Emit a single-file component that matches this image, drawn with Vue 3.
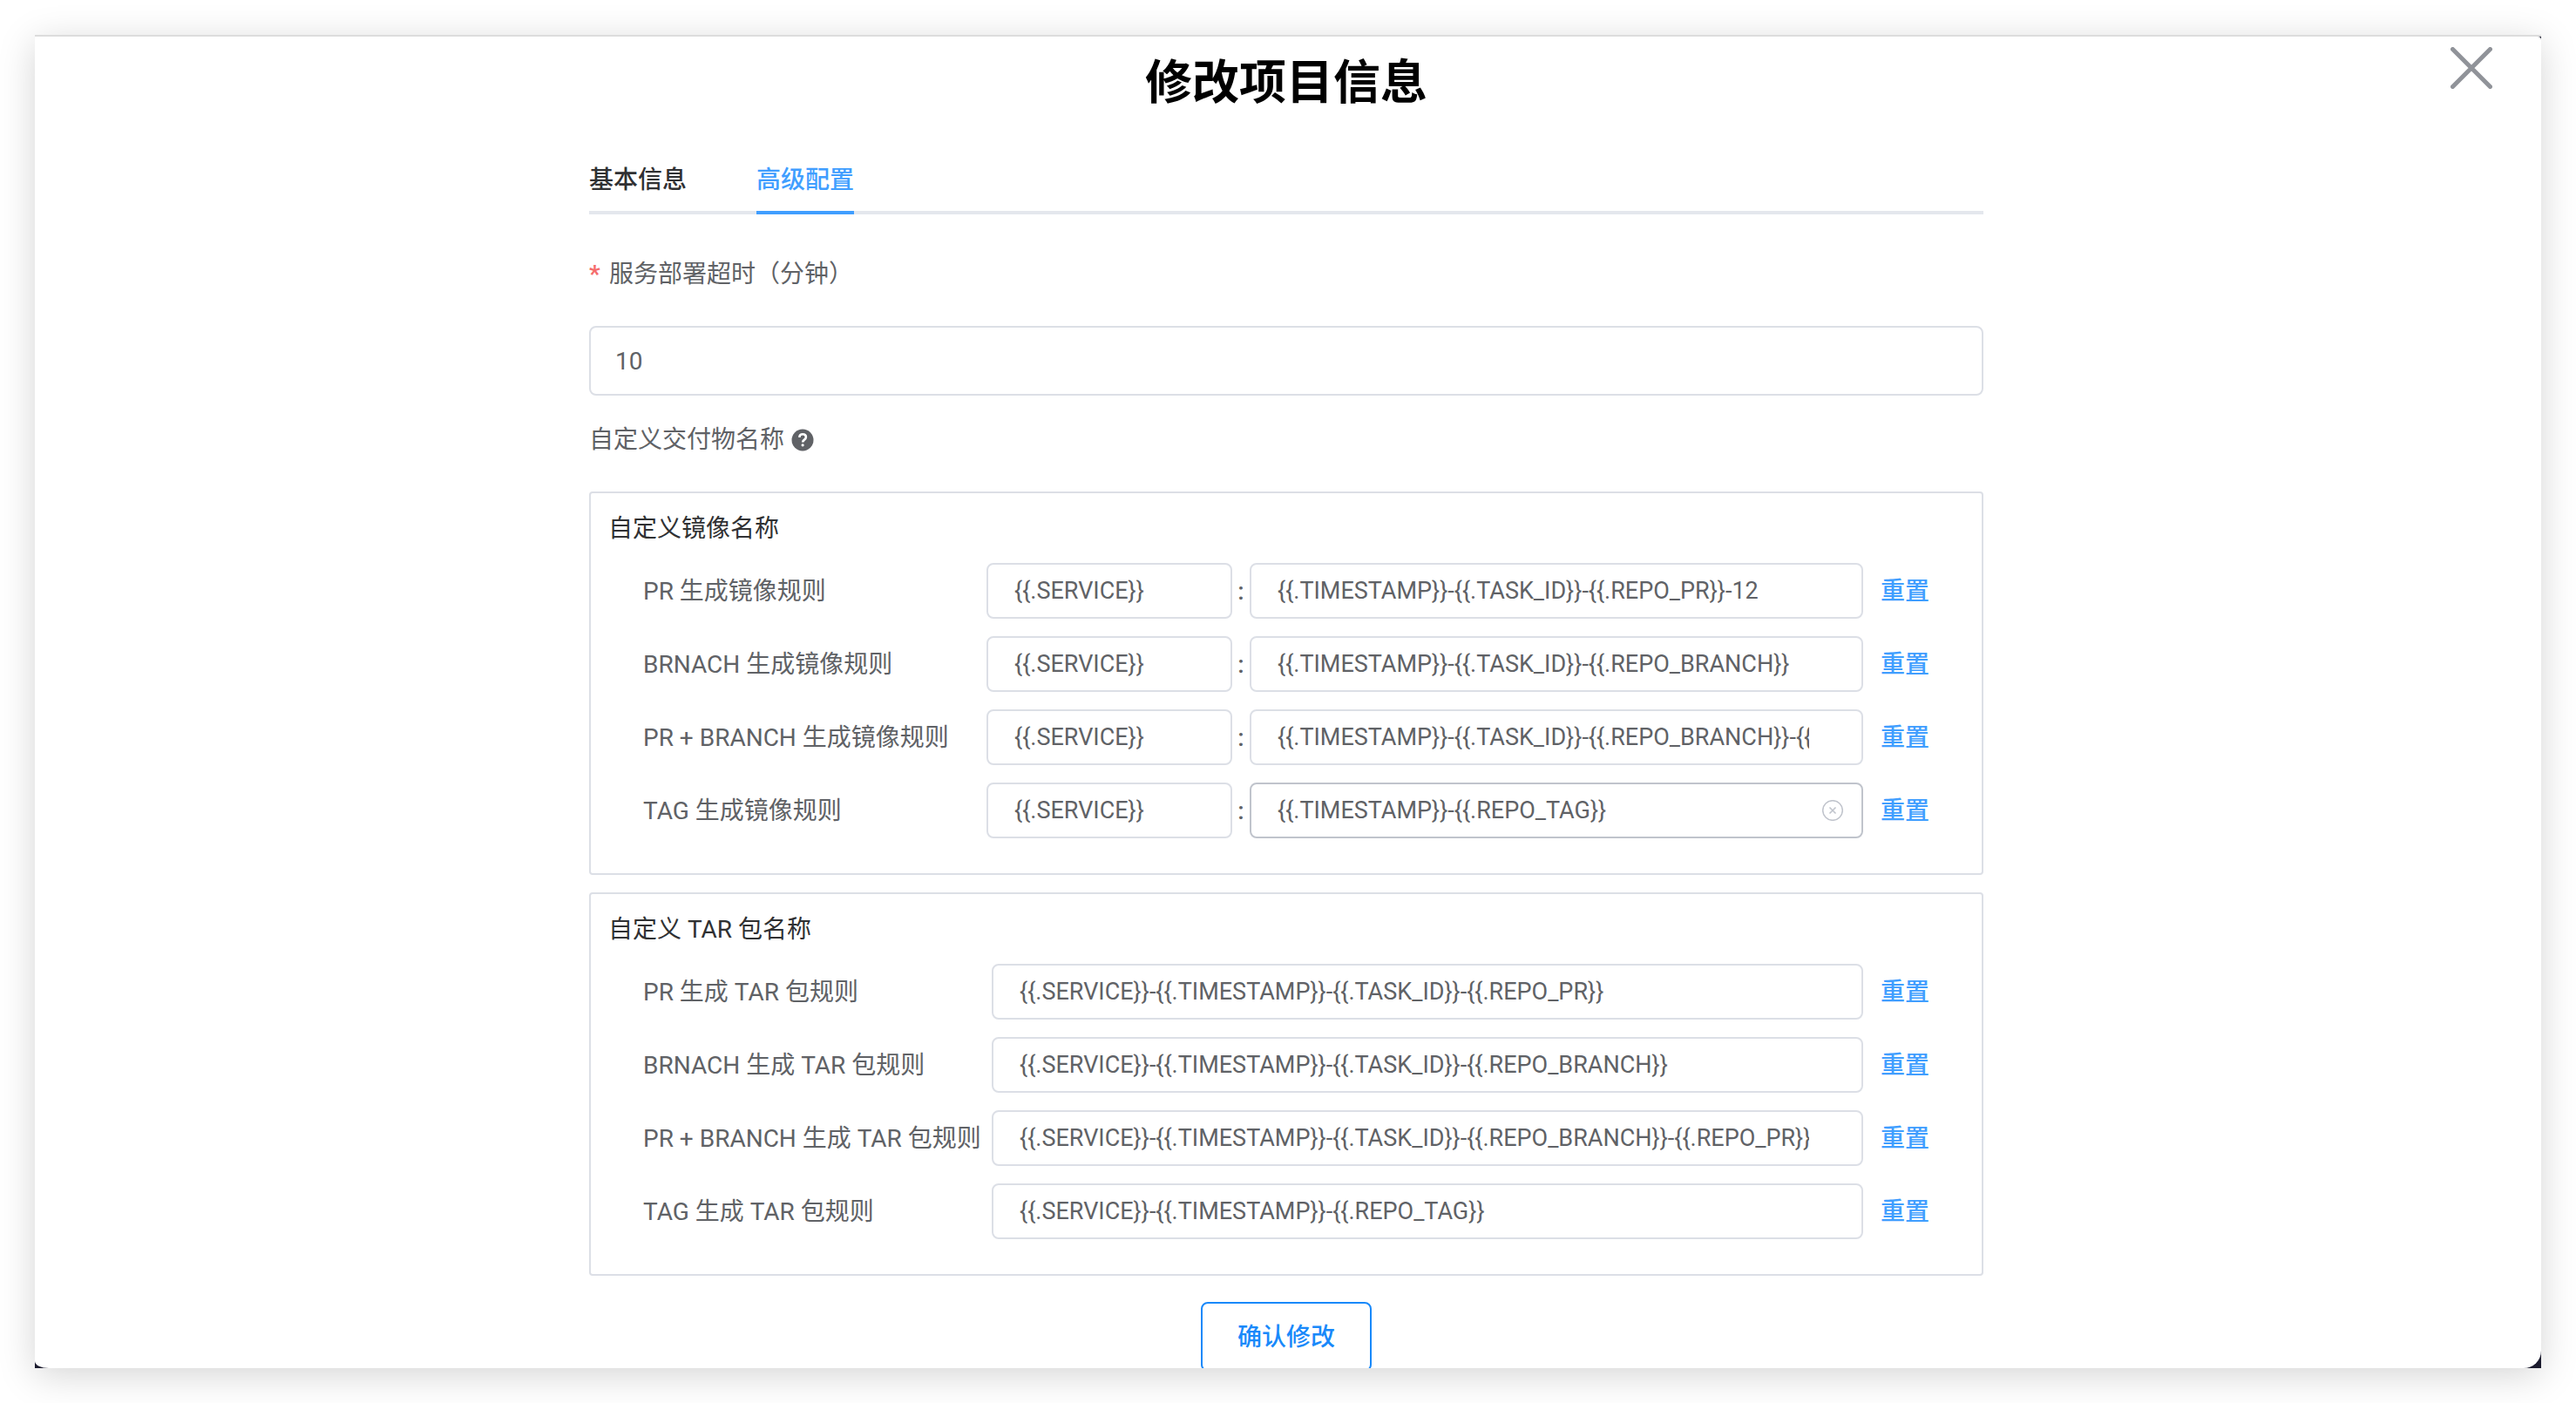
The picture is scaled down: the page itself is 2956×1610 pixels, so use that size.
<script setup>
import { ref, reactive } from 'vue'

const tabs = ['基本信息', '高级配置']
const activeTab = ref('高级配置')
const timeout = ref('10')

const imageRules = reactive([
  { id: 'img-pr', label: 'PR 生成镜像规则', name: '{{.SERVICE}}', tag: '{{.TIMESTAMP}}-{{.TASK_ID}}-{{.REPO_PR}}-12' },
  { id: 'img-branch', label: 'BRNACH 生成镜像规则', name: '{{.SERVICE}}', tag: '{{.TIMESTAMP}}-{{.TASK_ID}}-{{.REPO_BRANCH}}' },
  { id: 'img-pr-branch', label: 'PR + BRANCH 生成镜像规则', name: '{{.SERVICE}}', tag: '{{.TIMESTAMP}}-{{.TASK_ID}}-{{.REPO_BRANCH}}-{{.REPO_PR}}' },
  { id: 'img-tag', label: 'TAG 生成镜像规则', name: '{{.SERVICE}}', tag: '{{.TIMESTAMP}}-{{.REPO_TAG}}', clearable: true },
])

const tarRules = reactive([
  { id: 'tar-pr', label: 'PR 生成 TAR 包规则', value: '{{.SERVICE}}-{{.TIMESTAMP}}-{{.TASK_ID}}-{{.REPO_PR}}' },
  { id: 'tar-branch', label: 'BRNACH 生成 TAR 包规则', value: '{{.SERVICE}}-{{.TIMESTAMP}}-{{.TASK_ID}}-{{.REPO_BRANCH}}' },
  { id: 'tar-pr-branch', label: 'PR + BRANCH 生成 TAR 包规则', value: '{{.SERVICE}}-{{.TIMESTAMP}}-{{.TASK_ID}}-{{.REPO_BRANCH}}-{{.REPO_PR}}' },
  { id: 'tar-tag', label: 'TAG 生成 TAR 包规则', value: '{{.SERVICE}}-{{.TIMESTAMP}}-{{.REPO_TAG}}' },
])
</script>

<template>
  <div class="page">
    <div class="frame">
      <main class="dialog">
        <button class="close" type="button" aria-label="关闭">
          <svg viewBox="0 0 48 48" width="48" height="48" fill="none" stroke="currentColor" stroke-width="5" stroke-linecap="round">
            <path d="M2.5 2.5 45.5 45.5M45.5 2.5 2.5 45.5" />
          </svg>
        </button>
        <h1 class="title">修改项目信息</h1>

        <form class="content" @submit.prevent>
          <div class="tabs" role="tablist">
            <button
              v-for="tab in tabs"
              :key="tab"
              type="button"
              role="tab"
              class="tab"
              :class="{ active: tab === activeTab }"
              :aria-selected="tab === activeTab"
              @click="activeTab = tab"
            >{{ tab }}</button>
          </div>

          <label class="field-label required" for="timeout">服务部署超时（分钟）</label>
          <input id="timeout" v-model="timeout" class="input large" type="text" inputmode="numeric" />

          <div class="field-label name-label">
            <span>自定义交付物名称</span>
            <svg class="help" viewBox="0 0 26 26" width="26" height="26" aria-hidden="true">
              <circle cx="13" cy="13" r="12.5" fill="#606266" />
              <path d="M9.3 9.900C9.400 7.600 11 6.200 13.100 6.200c2.300 0 3.800 1.400 3.800 3.300 0 1.500-.8 2.300-1.900 3.100-1.100.8-1.800 1.300-1.800 2.800" fill="none" stroke="#fff" stroke-width="2.600" />
              <circle cx="13.100" cy="18.800" r="1.600" fill="#fff" />
            </svg>
          </div>

          <section class="rules">
            <h2 class="rules-title">自定义镜像名称</h2>
            <div v-for="rule in imageRules" :key="rule.id" class="rule">
              <label class="rule-label" :for="rule.id">{{ rule.label }}</label>
              <input v-model="rule.name" class="input name" type="text" :aria-label="rule.label" />
              <span class="colon">:</span>
              <span class="input-wrap">
                <input :id="rule.id" v-model="rule.tag" class="input" :class="{ hovered: rule.clearable }" type="text" />
                <button v-if="rule.clearable" class="clear" type="button" aria-label="清空" @click="rule.tag = ''">
                  <svg viewBox="0 0 24 24" width="24" height="24" fill="none" stroke="currentColor">
                    <circle cx="12" cy="12" r="11.300" stroke-width="1.500" />
                    <path d="M8.500 8.500l7 7M15.500 8.500l-7 7" stroke-width="1.600" />
                  </svg>
                </button>
              </span>
              <button class="reset" type="button">重置</button>
            </div>
          </section>

          <section class="rules">
            <h2 class="rules-title">自定义 TAR 包名称</h2>
            <div v-for="rule in tarRules" :key="rule.id" class="rule tar">
              <label class="rule-label" :for="rule.id">{{ rule.label }}</label>
              <span class="input-wrap">
                <input :id="rule.id" v-model="rule.value" class="input" type="text" />
              </span>
              <button class="reset" type="button">重置</button>
            </div>
          </section>

          <button class="submit" type="submit">确认修改</button>
        </form>
      </main>
    </div>
  </div>
</template>

<style>
body {
  margin: 0;
  background: #fff;
}
</style>

<style scoped>
.page {
  box-sizing: border-box;
  height: 100vh;
  padding: 40px;
  overflow: hidden;
  font-family: Roboto, "Noto Sans CJK SC", sans-serif;
  font-size: 28px;
  line-height: 40px;
  color: #606266;
}

.page *,
.page *::before {
  box-sizing: border-box;
}

button,
input {
  margin: 0;
  padding: 0;
  border: 0;
  background: none;
  font: inherit;
  color: inherit;
}

button {
  cursor: pointer;
}

/* The dark frame shows only behind the dialog's rounded corners. */
.frame {
  height: 100%;
  border-top: 2px solid #dcdcdc;
  background: #1b1b2e;
  box-shadow: 0 8px 40px rgba(0, 0, 0, 0.17);
}

.dialog {
  position: relative;
  height: 100%;
  padding: 14px 4px 0 0;
  overflow: hidden;
  border-radius: 0 4px 20px 16px / 0 4px 20px 8px;
  background: #fff;
}

.close {
  position: absolute;
  top: 12px;
  right: 56px;
  height: 48px;
  color: #909399;
}

.close svg,
.clear svg {
  display: block;
}

.title {
  margin: 0;
  font-size: 54px;
  font-weight: 700;
  line-height: 80px;
  color: #000;
  text-align: center;
}

.content {
  display: flex;
  flex-direction: column;
  width: 100%;
  max-width: 1600px;
  margin: 0 auto;
}

.tabs {
  display: flex;
  gap: 80px;
  height: 80px;
  margin-top: 30px;
  border-bottom: 4px solid #e4e7ed;
}

.tab {
  height: 80px;
  padding-top: 6px;
  border-bottom: 4px solid transparent;
  font-weight: 500;
  color: #303133;
}

.tab.active {
  border-bottom-color: #409eff;
  color: #409eff;
}

.field-label {
  display: flex;
  align-items: center;
  height: 40px;
}

.required {
  margin: 49px 0 39px;
}

.required::before {
  content: "*";
  width: 23px;
  font-weight: 700;
  color: #f56c6c;
}

.name-label {
  gap: 8px;
  margin: 31px 0 39px;
}

.help {
  display: block;
}

.input {
  width: 100%;
  height: 64px;
  padding: 0 60px 0 30px;
  border: 2px solid #dcdfe6;
  border-radius: 8px;
  outline: none;
  background: #fff;
  font-size: 27px;
}

.input.large {
  height: 80px;
  padding: 0 28px;
  font-size: 28px;
}

.input.hovered {
  border-color: #c0c4cc;
}

.rules {
  margin-bottom: 20px;
  padding: 21px 60px 40px 20px;
  border: 2px solid #dcdfe6;
  border-radius: 4px;
}

.rules-title {
  margin: 0 0 19px;
  font-size: 28px;
  font-weight: 400;
  line-height: 40px;
  color: #303133;
}

.rule {
  display: grid;
  grid-template-columns: 394px 282px 20px 1fr 56px;
  align-items: center;
  margin-bottom: 20px;
  padding-left: 40px;
}

.rule.tar {
  grid-template-columns: 400px 1fr 56px;
}

.rule:last-child {
  margin-bottom: 0;
}

.rule-label,
.colon,
.reset {
  padding-top: 2px;
  white-space: nowrap;
}

.input.name {
  padding-right: 28px;
}

.colon {
  font-weight: 500;
  text-align: center;
}

.input-wrap {
  position: relative;
  display: block;
  height: 64px;
  margin-right: 20px;
}

.clear {
  position: absolute;
  top: 20px;
  right: 23px;
  color: #c0c4cc;
}

.reset {
  width: 56px;
  font-weight: 500;
  color: #409eff;
}

.submit {
  align-self: center;
  width: 196px;
  height: 80px;
  margin-top: 10px;
  padding-top: 2px;
  border: 2px solid #1989fa;
  border-radius: 8px;
  font-weight: 500;
  color: #1989fa;
}
</style>
